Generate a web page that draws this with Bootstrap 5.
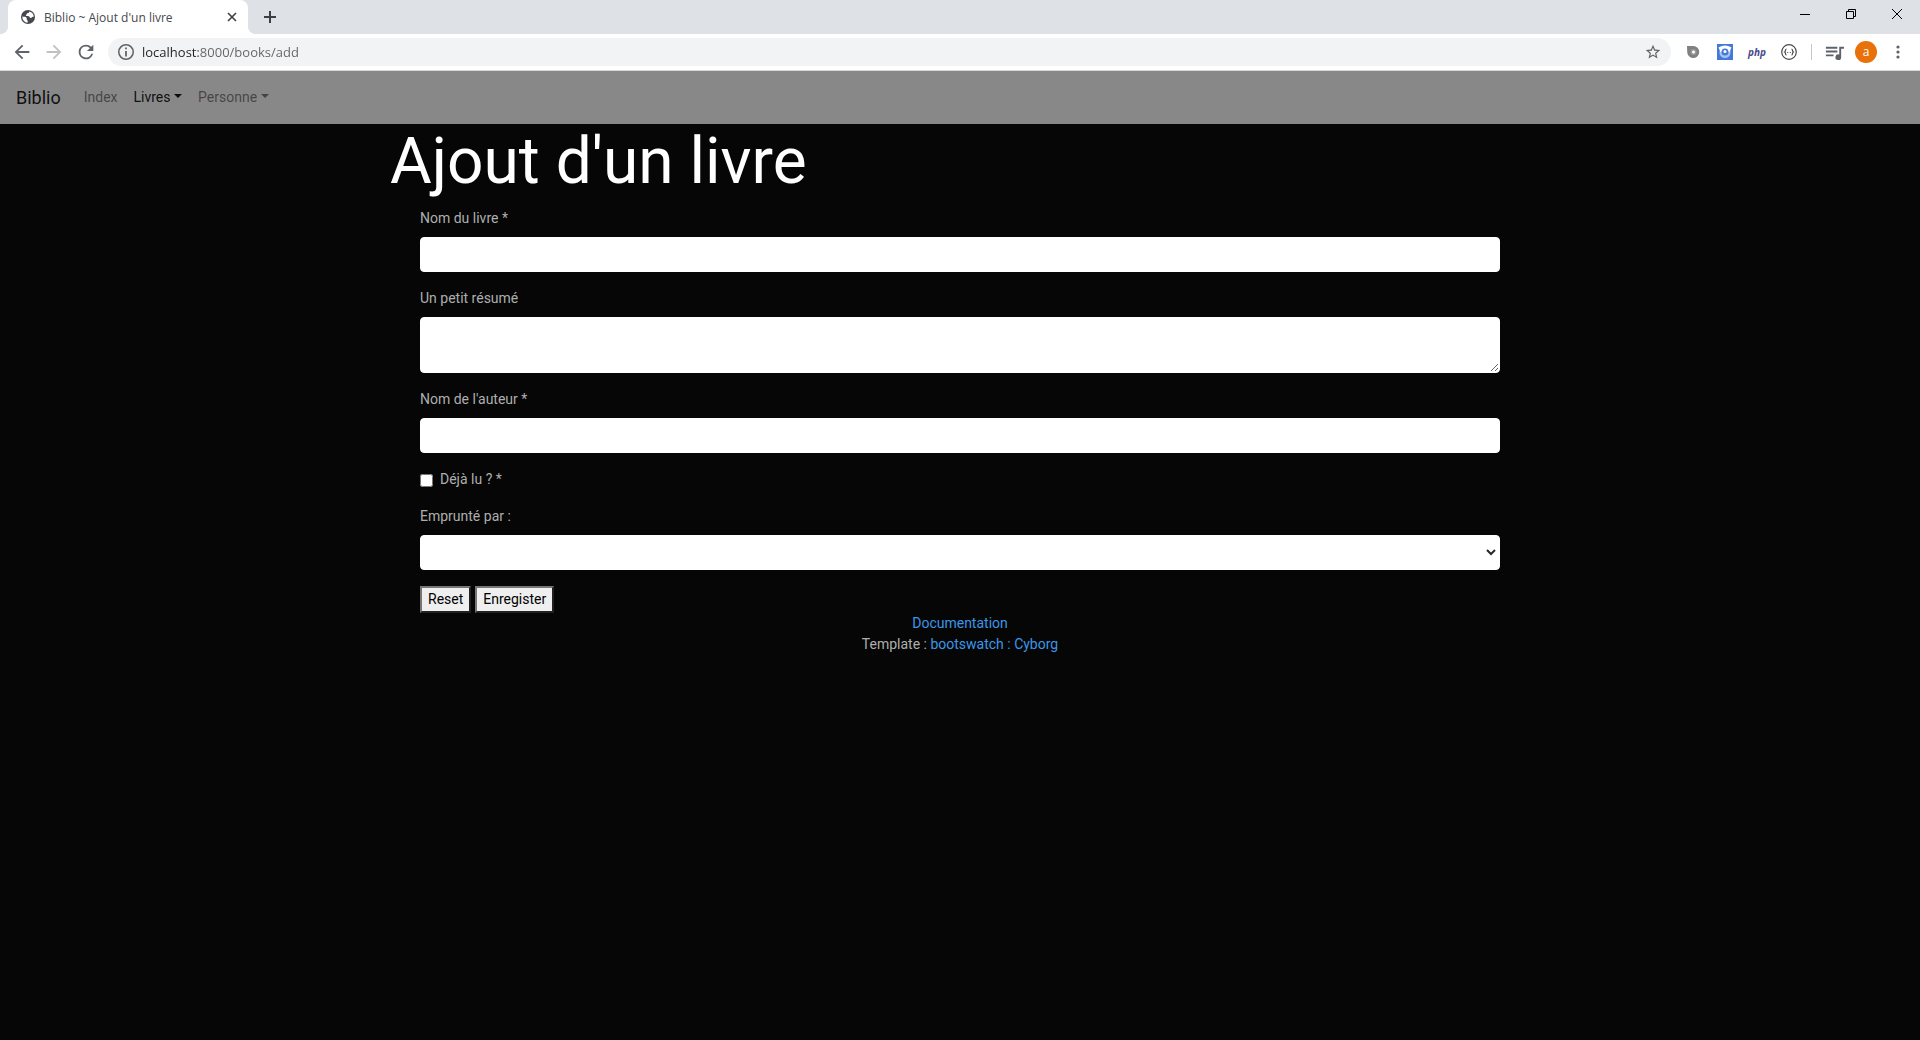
<!DOCTYPE html>
<html lang="fr">
<head>
<meta charset="utf-8">
<meta name="viewport" content="width=device-width, initial-scale=1">
<title>Biblio ~ Ajout d'un livre</title>
<link href="https://cdn.jsdelivr.net/npm/bootstrap@5.3.0/dist/css/bootstrap.min.css" rel="stylesheet">
<style>
body { font: 14px/21px Roboto, "Liberation Sans", sans-serif; background: #060606; color: #adafae; }
button { color: inherit; }
svg { display: block; fill: currentColor; flex-shrink: 0; }
.line-icon { fill: none; }

/* browser window */
.browser { font-family: "Open Sans", "Noto Sans", sans-serif; color: #5f6368; background: #fff; border-bottom: 1px solid #d5d7da; }
.tab-strip { background: #dee1e6; height: 34px; padding-left: 8px; }
.tab-item { position: relative; width: 240px; height: 34px; background: #fff; border-radius: 8px 8px 0 0; padding: 0 10px 0 12px; font-size: 12px; color: #45494d; }
.tab-item::before, .tab-item::after { content: ""; position: absolute; bottom: 0; width: 8px; height: 8px; }
.tab-item::before { left: -8px; background: radial-gradient(circle at 0 0, transparent 8px, #fff 8px); }
.tab-item::after { right: -8px; background: radial-gradient(circle at 100% 0, transparent 8px, #fff 8px); }
.plain-btn { display: flex; align-items: center; justify-content: center; border: 0; background: none; padding: 0; }
.new-tab { width: 28px; height: 28px; margin-left: 8px; color: #3c4043; }
.win-btn { width: 46px; height: 28px; color: #000; }
.toolbar-row { height: 36px; padding: 0 6px 0 12px; }
.tool-btn { width: 20px; height: 28px; }
.address { height: 28px; margin: 0 6px 0 12px; padding: 0 10px; background: #f1f3f4; border-radius: 14px; }
.address input { border: 0; outline: 0; padding: 0; font-size: 13px; height: 28px; color: #5f6368;
  background: linear-gradient(90deg, #202124 56px, #5f6368 56px); -webkit-background-clip: text; background-clip: text; -webkit-text-fill-color: transparent; }
.ext-btn { width: 32px; height: 28px; }
.php-mark { font: italic bold 10px "Open Sans", sans-serif; color: #474a8a; }
.avatar-dot { width: 22px; height: 22px; border-radius: 50%; background: #e8710a; color: #fff; font-size: 12px; line-height: 22px; }
.tool-rule { width: 1px; height: 16px; margin: 0 6px; background: #c4c6c9; }

/* page */
.site-nav { background: #888; padding: 8px 16px; min-height: 53px; --bs-navbar-color: rgba(0,0,0,.5); --bs-navbar-active-color: rgba(0,0,0,.9); --bs-navbar-brand-color: rgba(0,0,0,.9); --bs-navbar-brand-font-size: 18px; --bs-navbar-brand-margin-end: 15px; --bs-navbar-nav-link-padding-x: 8px; }
.site-nav .nav-link { font-size: 14px; }
.page-box { max-width: 1140px; }
.page-title { font-size: 64px; line-height: 76px; font-weight: 400; color: #fff; }
.book-form { padding: 0 30px; }
.field-label { display: block; margin-bottom: 8px; }
.book-form .form-control { font-size: 14px; line-height: 21px; border-color: #fff; border-radius: 4px; background: #fff; padding: 6px 12px; color: #282828; height: 35px; min-height: 35px; }
.book-form textarea.form-control { height: 56px; }
.book-form select.form-control { appearance: auto; padding: 6px 8px; }
.read-box { width: 13px; height: 13px; margin: 1px 7px 0 0; }
.raised-btn { border: 2px solid; border-color: #767676 #212121 #212121 #767676; background: #efefef; color: #000; height: 27px; padding: 1px 6px; line-height: 21px; }
.page-foot a { color: #3b97e8; text-decoration: none; }
</style>
<script src="https://cdn.jsdelivr.net/npm/bootstrap@5.3.0/dist/js/bootstrap.bundle.min.js"></script>
</head>
<body>
<header class="browser">
  <div class="tab-strip d-flex">
    <div class="tab-item d-flex align-items-center">
      <svg class="me-2" width="16" height="16" viewBox="0 0 16 16"><circle cx="8" cy="8" r="7"/><path fill="#fff" d="M2.3 7.6c1.600.2 3.400.2 4.200 1.200.6.8-.2 1.500.6 2.200.8.6.6 1.600.5 2.700A5.800 5.800 0 0 1 2.300 7.600zM9.200 2.400c0 1.200-.5 1.500-1.500 1.700-1 .2-.7 1.300-1.500 1.600-.6.3-.3 1.300.6 1.300 1.500 0 2.500.1 2.900 1.200.3 1 1.600.9 2 .2.4-.8 1.200-.8 2.100-.6A5.800 5.800 0 0 0 9.200 2.400z"/></svg>
      <span class="flex-grow-1">Biblio ~ Ajout d'un livre</span>
      <button class="plain-btn" aria-label="Fermer l'onglet"><svg width="12" height="12" viewBox="0 0 12 12" stroke="#3c4043" stroke-width="1.6"><path d="M2 2l8 8M10 2l-8 8"/></svg></button>
    </div>
    <button class="plain-btn new-tab align-self-center" aria-label="Nouvel onglet"><svg width="14" height="14" viewBox="0 0 14 14" stroke="currentColor" stroke-width="2"><path d="M7 1v12M1 7h12"/></svg></button>
    <div class="d-flex ms-auto">
      <button class="plain-btn win-btn" aria-label="Réduire"><svg width="10" height="10" viewBox="0 0 10 10"><path d="M0 5h10v1H0z"/></svg></button>
      <button class="plain-btn win-btn" aria-label="Restaurer"><svg class="line-icon" width="10" height="10" viewBox="0 0 10 10" stroke="#000"><path d="M.5 2.500h7v7h-7zM2.500 2.500v-2h7v7h-2"/></svg></button>
      <button class="plain-btn win-btn" aria-label="Fermer"><svg width="10" height="10" viewBox="0 0 10 10" stroke="#000"><path d="M0 0l10 10M10 0L0 10"/></svg></button>
    </div>
  </div>
  <div class="toolbar-row d-flex align-items-center">
    <div class="d-flex gap-2">
      <button class="plain-btn tool-btn me-1" aria-label="Retour"><svg width="22" height="22" viewBox="0 0 24 24"><path d="M20 11H7.830l5.590-5.590L12 4l-8 8 8 8 1.410-1.410L7.830 13H20z"/></svg></button>
      <button class="plain-btn tool-btn me-1" aria-label="Avancer"><svg width="22" height="22" viewBox="0 0 24 24" fill-opacity=".4"><path d="M4 11h12.170l-5.590-5.590L12 4l8 8-8 8-1.410-1.410L16.170 13H4z"/></svg></button>
      <button class="plain-btn tool-btn" aria-label="Actualiser"><svg width="22" height="22" viewBox="0 0 24 24"><path d="M17.650 6.350A7.960 7.960 0 0 0 12 4a8 8 0 1 0 7.730 10h-2.080A6 6 0 1 1 12 6c1.660 0 3.140.69 4.220 1.780L13 11h7V4z"/></svg></button>
    </div>
    <div class="address flex-grow-1 d-flex align-items-center">
      <svg class="me-2" width="16" height="16" viewBox="3 3 18 18"><path d="M11 7h2v2h-2zm0 4h2v6h-2zm1-8a9 9 0 1 0 0 18 9 9 0 0 0 0-18zm0 16.300a7.300 7.300 0 1 1 0-14.600 7.300 7.300 0 0 1 0 14.600z"/></svg>
      <input class="flex-grow-1" type="text" aria-label="Adresse" value="localhost:8000/books/add">
      <button class="plain-btn" aria-label="Ajouter aux favoris"><svg width="16" height="16" viewBox="1 1 22 22"><path d="M22 9.240l-7.190-.62L12 2 9.190 8.630 2 9.240l5.460 4.730L5.820 21 12 17.270 18.180 21l-1.630-7.030zM12 15.400l-3.760 2.270 1-4.280-3.320-2.880 4.380-.38L12 6.100l1.710 4.040 4.380.38-3.320 2.880 1 4.280z"/></svg></button>
    </div>
    <div class="d-flex align-items-center">
      <button class="plain-btn ext-btn" aria-label="Extension"><svg width="14" height="14" viewBox="0 0 14 14"><path fill="#808080" d="M1 1h6.500a6 6 0 1 1-6.200 7z"/><circle cx="7.500" cy="7" r="3" fill="#999"/><circle cx="7.500" cy="7" r="1.500" fill="#fff"/></svg></button>
      <button class="plain-btn ext-btn" aria-label="Extension"><svg width="16" height="16" viewBox="0 0 16 16"><path fill="#4479d9" d="M0 0h16v16H0z"/><circle cx="8" cy="8.500" r="5.500" fill="#a9c2ef"/><path d="M1.500 3.500Q8 -.5 14.500 3.500L12.500 8h-9z" fill="#fff"/><circle cx="8" cy="8" r="3.500" fill="#4479d9"/><circle cx="8" cy="7.500" r="1.500" fill="#fff"/></svg></button>
      <button class="plain-btn ext-btn php-mark">php</button>
      <button class="plain-btn ext-btn" aria-label="Extension"><svg class="line-icon" width="16" height="16" viewBox="0 0 16 16" stroke="#4a4a4a" stroke-width="1.200"><circle cx="8" cy="8" r="7.300"/><path d="M5.500 5c-1.500 0-.5 2.300-1.800 3 1.300.7.3 3 1.800 3M10.500 5c1.500 0 .5 2.300 1.800 3-1.300.7-.3 3-1.800 3M6.200 8.500h1M8.800 8.500h1"/></svg></button>
      <span class="tool-rule"></span>
      <button class="plain-btn ext-btn" aria-label="Contrôle des médias"><svg width="20" height="20" viewBox="1 1 21 21"><path d="M15 6H3v2h12zm0 4H3v2h12zM3 16h8v-2H3zM17 6v8.180a3 3 0 1 0 2 2.820V8h3V6z"/></svg></button>
      <button class="plain-btn ext-btn" aria-label="Profil"><span class="avatar-dot">a</span></button>
      <button class="plain-btn ext-btn" aria-label="Menu"><svg width="16" height="16" viewBox="0 0 16 16"><circle cx="8" cy="3" r="1.600"/><circle cx="8" cy="8" r="1.600"/><circle cx="8" cy="13" r="1.600"/></svg></button>
    </div>
  </div>
</header>

<nav class="navbar navbar-expand-lg site-nav">
  <a class="navbar-brand py-0" href="#">Biblio</a>
  <ul class="navbar-nav">
    <li class="nav-item"><a class="nav-link" href="#">Index</a></li>
    <li class="nav-item dropdown"><a class="nav-link active dropdown-toggle" href="#" role="button" data-bs-toggle="dropdown">Livres</a></li>
    <li class="nav-item dropdown"><a class="nav-link dropdown-toggle" href="#" role="button" data-bs-toggle="dropdown">Personne</a></li>
  </ul>
</nav>

<main class="page-box mx-auto">
  <h1 class="page-title mb-2">Ajout d'un livre</h1>
  <form class="book-form">
    <div class="mb-3">
      <label class="field-label" for="title">Nom du livre *</label>
      <input class="form-control" id="title" type="text">
    </div>
    <div class="mb-3">
      <label class="field-label" for="summary">Un petit résumé</label>
      <textarea class="form-control" id="summary" rows="2"></textarea>
    </div>
    <div class="mb-3">
      <label class="field-label" for="author">Nom de l'auteur *</label>
      <input class="form-control" id="author" type="text">
    </div>
    <div class="mb-3 d-flex align-items-center">
      <input class="read-box" id="read" type="checkbox">
      <label for="read">Déjà lu ? *</label>
    </div>
    <div class="mb-3">
      <label class="field-label" for="borrower">Emprunté par :</label>
      <select class="form-control" id="borrower"><option></option></select>
    </div>
    <div class="d-flex gap-1">
      <button class="raised-btn" type="reset">Reset</button>
      <button class="raised-btn" type="submit">Enregister</button>
    </div>
  </form>
</main>
<footer class="page-foot text-center">
  <a href="#">Documentation</a><br>
  Template : <a href="#">bootswatch : Cyborg</a>
</footer>
</body>
</html>
